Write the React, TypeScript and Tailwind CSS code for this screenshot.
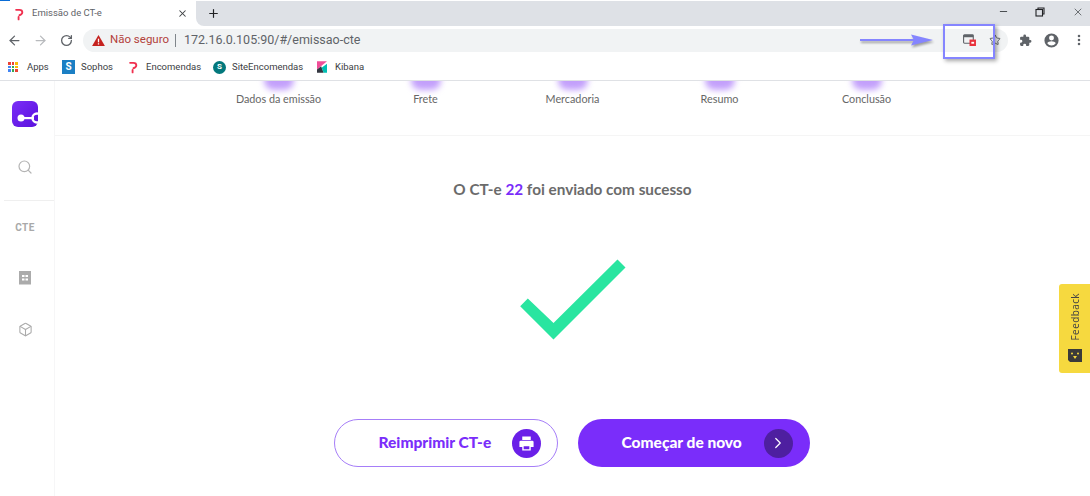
import React from "react";
import { ArrowLeft, ArrowRight, RotateCw, X, Plus, Minus, Star, Search, Box, MoreVertical, ChevronRight } from "lucide-react";

function PLogo({ className = "" }: { className?: string }) {
  return (
    <svg viewBox="0 0 12 16" className={className}>
      <path d="M2.500 3 H6.500 Q10 3 10 6 Q10 8.500 6.500 9.500" fill="none" stroke="#f0304f" strokeWidth="2.200" strokeLinecap="round" />
      <path d="M5.500 11.500 V14.500" fill="none" stroke="#f0304f" strokeWidth="2.200" strokeLinecap="round" />
    </svg>
  );
}

function Step({ label }: { label: string }) {
  return (
    <div className="flex flex-col items-center overflow-hidden">
      <div className="-mt-[10px] h-[19px] w-[30px] rounded-full bg-[#c3a0fb] blur-[3px]" />
      <span className="mt-[1px] text-[10.800px] leading-[16px] text-[#666]">{label}</span>
    </div>
  );
}

export default function App() {
  return (
    <div className="relative h-[496px] w-[1090px] overflow-hidden bg-white font-['Roboto',sans-serif]">
      <div className="absolute left-0 top-0 h-[1px] w-[10px] bg-[#0a6cd6]" />
      {/* tab strip */}
      <div className="flex h-[26px] items-stretch bg-white pt-[1px]">
        <div className="flex w-[196px] items-center bg-white pl-[14px] pr-[8px]">
          <PLogo className="h-[14px] w-[10px]" />
          <span className="ml-[8px] flex-1 text-[9.500px] text-[#5f6368]">Emissão de CT-e</span>
          <X className="h-[11px] w-[11px] text-[#3c4043]" strokeWidth={2.200} />
        </div>
        <div className="flex flex-1 items-center rounded-bl-[8px] bg-[#dee1e6] pl-[11px]">
          <Plus className="h-[13px] w-[13px] text-[#202124]" strokeWidth={2.200} />
          <div className="ml-auto flex -translate-y-[2px] items-center pr-[6px]">
            <Minus className="h-[11px] w-[11px] text-[#3c4043]" />
            <svg viewBox="0 0 10 10" className="ml-[26px] h-[10px] w-[10px]" fill="none" stroke="#202124" strokeWidth="1.100">
              <rect x="1" y="2.500" width="6.500" height="6.500" />
              <path d="M3 2.500 V1 H9 V7 H7.500" />
            </svg>
            <X className="ml-[27px] h-[12px] w-[12px] text-[#3c4043]" strokeWidth={1.400} />
          </div>
        </div>
      </div>
      {/* toolbar */}
      <div className="flex h-[28px] items-center pl-[7px]">
        <ArrowLeft className="h-[15px] w-[15px] text-[#5f6368]" strokeWidth={2} />
        <ArrowRight className="ml-[11px] h-[15px] w-[15px] text-[#b8babd]" strokeWidth={2} />
        <RotateCw className="ml-[12px] h-[13px] w-[13px] text-[#5f6368]" strokeWidth={2.400} />
        <div className="ml-[10px] flex h-[23px] w-[925px] items-center rounded-full bg-[#f1f3f4] pl-[9px] pr-[7px]">
          <svg viewBox="0 0 14 12" className="h-[11px] w-[13px]">
            <path d="M7 0 L14 12 H0 Z" fill="#c5221f" />
            <rect x="6.300" y="4" width="1.400" height="4" fill="#fff" />
            <rect x="6.300" y="9" width="1.400" height="1.400" fill="#fff" />
          </svg>
          <span className="ml-[5px] text-[11.500px] text-[#b3413b]">Não seguro</span>
          <span className="ml-[6px] mr-[8px] h-[13px] w-[1px] bg-[#80868b]" />
          <span className="text-[12.500px] text-[#5f6368]">172.16.0.105:90/#/emissao-cte</span>
          <div className="ml-auto flex items-center gap-[13px]">
            <svg viewBox="0 0 14 13" className="h-[12px] w-[13px]">
              <rect x="0.600" y="1" width="10.500" height="9" rx="1" fill="none" stroke="#5f6368" strokeWidth="1.200" />
              <rect x="0.600" y="1" width="10.500" height="2.500" fill="#5f6368" />
              <rect x="7" y="6" width="7" height="7" fill="#e8323c" />
              <rect x="9" y="8.500" width="3" height="2" fill="#fff" />
            </svg>
            <Star className="h-[12px] w-[12px] text-[#5f6368]" strokeWidth={2} />
          </div>
        </div>
        <div className="ml-[11px] flex items-center">
          <svg viewBox="0 0 24 24" className="h-[13px] w-[13px]" fill="#5f6368">
            <path d="M20.500 11H19V7a2 2 0 0 0-2-2h-4V3.500a2.500 2.500 0 0 0-5 0V5H4a2 2 0 0 0-2 2v3.800h1.500a2.700 2.700 0 0 1 0 5.400H2V20a2 2 0 0 0 2 2h3.800v-1.500a2.700 2.700 0 0 1 5.400 0V22H17a2 2 0 0 0 2-2v-4h1.500a2.500 2.500 0 0 0 0-5z" />
          </svg>
          <svg viewBox="0 0 24 24" className="ml-[11px] h-[17px] w-[17px]" fill="#5f6368">
            <path d="M12 2a10 10 0 1 0 0 20 10 10 0 0 0 0-20zm0 3a3.500 3.500 0 1 1 0 7 3.500 3.500 0 0 1 0-7zm0 14.200a7.300 7.300 0 0 1-6-3.200c0-2 4-3.100 6-3.100s6 1.100 6 3.100a7.300 7.300 0 0 1-6 3.200z" />
          </svg>
          <MoreVertical className="ml-[12px] h-[14px] w-[14px] text-[#5f6368]" strokeWidth={2.400} />
        </div>
      </div>
      {/* bookmarks */}
      <div className="flex h-[27px] items-center border-b border-[#dfe1e5] pl-[8px] text-[9.500px] text-[#3c4043]">
        <div className="flex w-[54px] items-center gap-[9px]">
          <div className="grid h-[10px] w-[10px] grid-cols-3 gap-[1px]">
            <i className="bg-[#ea4335]" /><i className="bg-[#ea4335]" /><i className="bg-[#fbbc04]" />
            <i className="bg-[#4285f4]" /><i className="bg-[#34a853]" /><i className="bg-[#fbbc04]" />
            <i className="bg-[#4285f4]" /><i className="bg-[#34a853]" /><i className="bg-[#ea4335]" />
          </div>
          <span>Apps</span>
        </div>
        <div className="flex w-[66px] items-center gap-[6px]">
          <div className="flex h-[14px] w-[13px] items-center justify-center bg-[#1b7fc4] text-[10px] font-bold leading-none text-white">S</div>
          <span>Sophos</span>
        </div>
        <div className="flex w-[85px] items-center gap-[8px]">
          <PLogo className="h-[14px] w-[10px]" />
          <span>Encomendas</span>
        </div>
        <div className="flex w-[104px] items-center gap-[6px]">
          <div className="flex h-[13px] w-[13px] items-center justify-center rounded-full bg-[#03787c] text-[8px] font-bold leading-none text-white">S</div>
          <span>SiteEncomendas</span>
        </div>
        <div className="flex items-center gap-[8px]">
          <svg viewBox="0 0 12 14" className="h-[14px] w-[10px]">
            <path d="M0 0 H12 L0 10 Z" fill="#f04e98" />
            <path d="M0 10 L5 6 L8 14 H0 Z" fill="#343741" />
            <path d="M5.500 8 L12 3 V14 H8 Z" fill="#00bfb3" />
          </svg>
          <span>Kibana</span>
        </div>
      </div>
      {/* app body */}
      <div className="flex h-[415px] font-['Lato',sans-serif]">
        <aside className="flex w-[55px] shrink-0 flex-col items-center border-r border-[#f6f6f7] pr-[4px] pt-[20px]">
          <svg viewBox="0 0 26 26" className="h-[26px] w-[26px]">
            <defs>
              <linearGradient id="lg" x1="0" y1="0" x2="1" y2="1">
                <stop offset="0" stopColor="#7b2ff7" />
                <stop offset="1" stopColor="#5a10dd" />
              </linearGradient>
            </defs>
            <rect width="26" height="26" rx="6" fill="url(#lg)" />
            <circle cx="9" cy="17" r="3.500" fill="#fff" />
            <rect x="9" y="16" width="13" height="2.200" fill="#fff" />
            <circle cx="25" cy="17" r="4.500" fill="none" stroke="#fff" strokeWidth="2.400" />
          </svg>
          <Search className="mt-[32px] h-[16px] w-[16px] text-[#b4b4b4]" strokeWidth={1.800} />
          <div className="-mr-[4px] mt-[25px] h-[1px] w-[50px] self-end bg-[#efefef]" />
          <span className="mt-[21px] font-['Roboto',sans-serif] text-[10px] font-bold leading-[12px] tracking-[0.500px] text-[#a9a9a9]">CTE</span>
          <svg viewBox="0 0 12 14" className="mt-[37px] h-[14px] w-[12px]">
            <path d="M0 0 H12 V13 L11 14 L10 13 L9 14 L8 13 L7 14 L6 13 L5 14 L4 13 L3 14 L2 13 L1 14 L0 13 Z" fill="#ababab" />
            <path d="M3 4 H5.500 V6 H3 Z M6.500 4 H9 V6 H6.500 Z M3 7.500 H5.500 V9.500 H3 Z M6.500 7.500 H9 V9.500 H6.500 Z" fill="#fff" />
          </svg>
          <Box className="mt-[37px] h-[15px] w-[15px] text-[#ababab]" strokeWidth={1.700} />
        </aside>
        <main className="flex flex-1 flex-col items-center">
          <div className="grid h-[55px] w-full grid-cols-[repeat(5,147px)] justify-center border-b border-[#f5f5f5]">
            <Step label="Dados da emissão" />
            <Step label="Frete" />
            <Step label="Mercadoria" />
            <Step label="Resumo" />
            <Step label="Conclusão" />
          </div>
          <p className="mt-[42px] text-[15.300px] font-bold leading-[22px] text-[#6b6b6b]">
            O CT-e <span className="text-[#7a2dfa]">22</span> foi enviado com sucesso
          </p>
          <svg viewBox="0 0 106 82" className="mt-[59px] h-[82px] w-[106px]">
            <polygon points="97.500,0.500 105.500,8.500 33.500,80.500 0.200,47.200 7.800,39.500 33.500,64" fill="#29e5a0" />
          </svg>
          <div className="mr-[2px] mt-[78px] flex gap-[20px]">
            <button className="flex h-[48px] w-[224px] items-center rounded-full border border-[#a67ef8] bg-white pl-[44px] pr-[16px]">
              <span className="text-[15.500px] font-black text-[#7a2dfa]">Reimprimir CT-e</span>
              <span className="ml-auto flex h-[29px] w-[29px] items-center justify-center rounded-full bg-[#6a1fe8]">
                <svg viewBox="0 0 24 24" className="h-[17px] w-[17px]" fill="#fff">
                  <path d="M6 2h12v5H6zM4 8h16a2 2 0 0 1 2 2v7h-4v5H6v-5H2v-7a2 2 0 0 1 2-2zm4 8v4h8v-4z" />
                </svg>
              </span>
            </button>
            <button className="flex h-[48px] w-[232px] items-center rounded-full bg-[#7a2dfa] pl-[44px] pr-[17px]">
              <span className="text-[15.500px] font-black text-white">Começar de novo</span>
              <span className="ml-auto flex h-[29px] w-[29px] items-center justify-center rounded-full bg-[#4e1fa0]">
                <ChevronRight className="h-[18px] w-[18px] text-white" strokeWidth={1.600} />
              </span>
            </button>
          </div>
        </main>
      </div>
      {/* annotation overlay */}
      <div className="absolute left-[943px] top-[24px] h-[35px] w-[52px] border-[2.500px] border-[#8585ff] shadow-[2px_2px_4px_rgba(0,0,0,0.35)]" />
      <svg viewBox="0 0 76 14" className="absolute left-[859px] top-[33px] h-[14px] w-[76px] drop-shadow-[1px_2px_1px_rgba(0,0,0,0.35)]">
        <path d="M1 7 H55" stroke="#8585ff" strokeWidth="2" />
        <path d="M52 1.500 L74 7 L52 12.500 L55 7 Z" fill="#8585ff" />
      </svg>
      {/* feedback */}
      <div className="absolute right-0 top-[284px] flex h-[89px] w-[31px] flex-col items-center rounded-l-[3px] bg-[#f6d93f] pt-[9px] font-['Open_Sans',sans-serif]">
        <span className="rotate-180 text-[10px] leading-[14px] tracking-[0.400px] text-[#444] [writing-mode:vertical-rl]">Feedback</span>
        <svg viewBox="0 0 14 13" className="mb-[11px] mt-auto h-[13px] w-[14px]">
          <path d="M0 0 H14 V13 H2 L0 11 Z" fill="#3a3a3a" />
          <circle cx="4" cy="4.500" r="1" fill="#f6d93f" />
          <circle cx="10" cy="4.500" r="1" fill="#f6d93f" />
          <path d="M5 7 H9 L7 10 Z" fill="#f6d93f" />
        </svg>
      </div>
    </div>
  );
}
